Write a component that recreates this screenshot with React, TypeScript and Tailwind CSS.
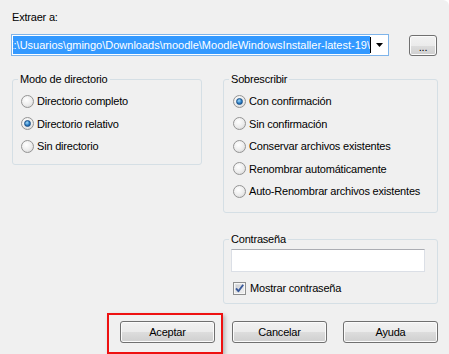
import React from "react";

const btnFace =
  "bg-[linear-gradient(to_bottom,#f2f2f2_0%,#ebebeb_50%,#dddddd_50%,#cfcfcf_100%)] border border-[#707070] rounded-[3px] shadow-[inset_0_0_0_1px_#fbfbfb]";

const Radio = ({ label, checked }: { label: string; checked?: boolean }) => (
  <div className="flex items-center gap-[3px] h-[22.5px] whitespace-nowrap">
    <span className="w-[13px] h-[13px] shrink-0 rounded-full border border-[#949494] bg-[radial-gradient(circle_at_40%_35%,#ffffff_0%,#ececec_55%,#cdcdcd_100%)] flex items-center justify-center">
      {checked && (
        <span className="w-[7px] h-[7px] rounded-full border border-[#1b5087] bg-[radial-gradient(circle_at_40%_35%,#a4dcfb_0%,#2a7cc4_55%,#0f4b8a_100%)]" />
      )}
    </span>
    <span>{label}</span>
  </div>
);

const Checkbox = ({ label }: { label: string }) => (
  <div className="flex items-center gap-[4px] h-[14px]">
    <svg width="13" height="13" viewBox="0 0 13 13" className="shrink-0">
      <defs>
        <linearGradient id="cb-bg" x1="0" y1="0" x2="1" y2="1">
          <stop offset="0%" stopColor="#c9ccd1" />
          <stop offset="100%" stopColor="#f4f4f4" />
        </linearGradient>
      </defs>
      <rect x="0.5" y="0.5" width="12" height="12" fill="#f7f7f7" stroke="#8e8f8f" />
      <rect x="2.5" y="2.5" width="8" height="8" fill="url(#cb-bg)" stroke="#dedede" strokeWidth="0.5" />
      <path d="M3 6.3 L5.4 9.2 L10.2 2.8" fill="none" stroke="#3a5a9a" strokeWidth="1.9" strokeLinejoin="round" />
    </svg>
    <span>{label}</span>
  </div>
);

// win7 style group box: light border with caption sitting on the top edge
const Group = ({ title, className, children }: { title: string; className: string; children?: React.ReactNode }) => (
  <div className={`relative border border-[#d5dfe5] rounded-[3px] ${className}`}>
    <span className="absolute -top-[8px] left-[5px] px-[2px] leading-[14px] bg-[#f0f0f0]">{title}</span>
    {children}
  </div>
);

const Button = ({ label, primary, className = "" }: { label: string; primary?: boolean; className?: string }) => (
  <div
    className={`h-[22px] w-[95px] flex items-center justify-center ${btnFace} ${
      primary ? "border-[#3c7fb1] shadow-[inset_0_0_0_1px_#8fd3f5]" : ""
    } ${className}`}
  >
    {label}
  </div>
);

export default function App() {
  return (
    <div className="relative w-[449px] h-[354px] overflow-hidden bg-[#f0f0f0] rounded-tr-[6px] text-[11px] tracking-[-0.2px] text-black font-['Liberation_Sans',Arial,sans-serif] px-[11px] pt-[11px]">
      <div className="pl-px leading-[13px]">Extraer a:</div>

      <div className="mt-[10px] flex items-center">
        <div className="w-[378px] h-[22px] border border-[#7eb4ea] bg-white flex items-center">
          <div className="flex-1 min-w-0 h-[18px] ml-px flex justify-end overflow-hidden whitespace-nowrap">
            <span className="bg-[#3399ff] text-white leading-[18px] tracking-normal">
              E:\Usuarios\gmingo\Downloads\moodle\MoodleWindowsInstaller-latest-19\
            </span>
          </div>
          <div className="w-px h-[16px] bg-black" />
          <div className="w-[17px] h-full flex items-center justify-center">
            <svg width="7" height="4" viewBox="0 0 7 4">
              <path d="M0 0 H7 L3.5 4 Z" fill="#000" />
            </svg>
          </div>
        </div>
        <div className={`ml-[20px] w-[28px] h-[21px] flex items-end justify-center pb-[3px] leading-[10px] ${btnFace} border-[#8a8a8a]`}>
          ...
        </div>
      </div>

      <div className="mt-[23px] ml-px flex items-start">
        <Group title="Modo de directorio" className="w-[190px] h-[86px] pl-[8px] pt-[10px]">
          <Radio label="Directorio completo" />
          <Radio label="Directorio relativo" checked />
          <Radio label="Sin directorio" />
        </Group>

        <div className="ml-[21px] w-[215px] flex flex-col">
          <Group title="Sobrescribir" className="h-[134px] pl-[9px] pt-[10px]">
            <Radio label="Con confirmación" checked />
            <Radio label="Sin confirmación" />
            <Radio label="Conservar archivos existentes" />
            <Radio label="Renombrar automáticamente" />
            <Radio label="Auto-Renombrar archivos existentes" />
          </Group>

          <Group title="Contraseña" className="mt-[26px] h-[65px] pt-[9px]">
            <div className="ml-[7px] w-[194px] h-[23px] bg-white border border-[#dbdfe6] border-t-[#abadb3]" />
            <div className="mt-[9px] ml-[9px]">
              <Checkbox label="Mostrar contraseña" />
            </div>
          </Group>
        </div>
      </div>

      <div className="mt-[17px] flex justify-end">
        <Button label="Aceptar" primary />
        <Button label="Cancelar" className="ml-[17px]" />
        <Button label="Ayuda" className="ml-[16px]" />
      </div>

      <div className="absolute left-[107px] top-[313px] w-[116px] h-[41px] border-2 border-[#ee1111] shadow-[2px_2px_4px_rgba(0,0,0,0.25)]" />
    </div>
  );
}
